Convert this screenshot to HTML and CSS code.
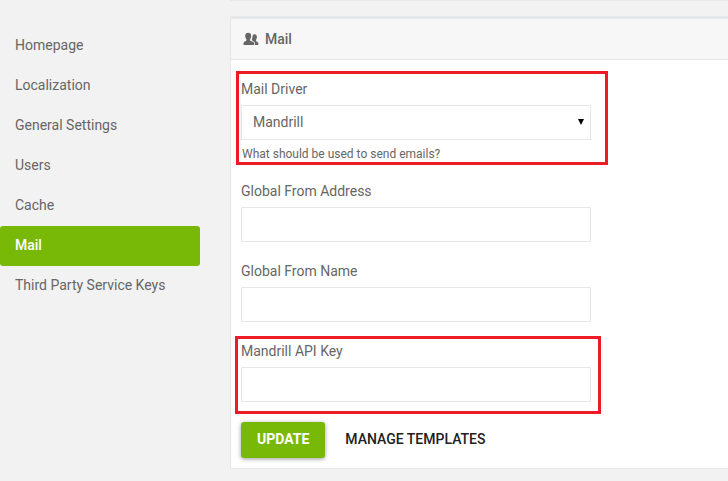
FILE: index.html
```html
<!DOCTYPE html>
<html lang="en">
<head>
<meta charset="utf-8">
<meta name="viewport" content="width=device-width, initial-scale=1">
<title>Mail settings</title>
<link rel="stylesheet" href="styles.css">
</head>
<body>
<div class="layout">
  <nav class="sidebar">
    <a class="nav-link" href="#">Homepage</a>
    <a class="nav-link" href="#">Localization</a>
    <a class="nav-link" href="#">General Settings</a>
    <a class="nav-link" href="#">Users</a>
    <a class="nav-link" href="#">Cache</a>
    <a class="nav-link active" href="#" aria-current="page">Mail</a>
    <a class="nav-link" href="#">Third Party Service Keys</a>
  </nav>
  <main class="content">
    <section class="card">
      <header class="card-header">
        <svg class="icon" viewBox="0 0 16 14" aria-hidden="true">
          <path d="M11.800 13H15.300v-2c-.3-.9-1.800-1.300-2.300-1.900-.2-.5-.1-.9.100-1.300.5-.7.800-1.500.8-2.700 0-1.900-.9-2.900-2.200-2.900-1.100 0-1.900.6-2.200 1.700.1 1.500-.2 2.800-.7 3.700.1.500.3.900.6 1.200 1.300.6 2.400 1.200 2.400 2.400z"/>
          <path d="M.5 13v-2.100c.4-1.200 2.400-1.500 2.900-2.300.2-.5.100-1-.2-1.500C2.600 6.300 2.200 5.300 2.200 4c0-2 1.100-3.200 3-3.200S8.200 2 8.200 4c0 1.300-.4 2.300-1 3.100-.3.500-.4 1-.2 1.500.5.800 3.700 1.100 4 2.300V13z"/>
        </svg>
        <h1 class="card-title">Mail</h1>
      </header>
      <form class="card-body">
        <div class="field highlight highlight-driver">
          <label for="driver">Mail Driver</label>
          <div class="select-wrap">
            <select id="driver" class="control"><option>Mandrill</option></select>
            <svg class="arrow" viewBox="0 0 6 6" aria-hidden="true"><path d="M0 0h6L3 6z"/></svg>
          </div>
          <p class="help">What should be used to send emails?</p>
        </div>
        <div class="field">
          <label for="address">Global From Address</label>
          <input id="address" class="control" type="text">
        </div>
        <div class="field">
          <label for="name">Global From Name</label>
          <input id="name" class="control" type="text">
        </div>
        <div class="field highlight highlight-key">
          <label for="key">Mandrill API Key</label>
          <input id="key" class="control" type="text">
        </div>
        <div class="actions">
          <button class="button primary" type="submit">UPDATE</button>
          <a class="button" href="#">MANAGE TEMPLATES</a>
        </div>
      </form>
    </section>
  </main>
</div>
</body>
</html>
```
FILE: styles.css
```css
* {
  box-sizing: border-box;
}

body {
  margin: 0;
  background: #f2f2f2;
  color: #666;
  font: 14px/20px Roboto, sans-serif;
}

.layout {
  display: grid;
  grid-template-columns: 200px 1fr;
  column-gap: 30px;
}

.sidebar {
  display: flex;
  flex-direction: column;
  padding-top: 26px;
}

.nav-link {
  padding: 9px 15px 11px;
  border-radius: 3px;
  color: #666;
  text-decoration: none;
}

.nav-link.active {
  background: #78b907;
  color: #fff;
  font-weight: 500;
}

.content {
  border-top: 1px solid #e5e9ec;
  padding: 15px 0 12px;
}

.card {
  border: 1px solid #e5e7e8;
  border-top: 3px solid #e5e9ec;
  border-right: 0;
  border-radius: 2px 0 0 2px;
  background: #fff;
}

.card-header {
  display: flex;
  align-items: center;
  gap: 6px;
  padding: 10px 12px;
  border-bottom: 1px solid #e5e7e8;
  background: #f7f7f7;
}

.icon {
  width: 16px;
  height: 14px;
  fill: #666;
}

.card-title {
  margin: 0;
  font-size: 14px;
  line-height: 20px;
  font-weight: 500;
}

.card-body {
  display: flex;
  flex-direction: column;
  gap: 19px;
  padding: 19px 10px 10px;
}

.field {
  display: flex;
  flex-direction: column;
  gap: 6px;
  position: relative;
  width: 100%;
  max-width: 350px;
}

.control {
  display: block;
  width: 100%;
  height: 35px;
  margin: 0;
  padding: 0 11px 1px;
  border: 1px solid #e5e7e8;
  border-radius: 0;
  background: #fff;
  color: #666;
  font: inherit;
  appearance: none;
}

.select-wrap {
  position: relative;
}

.arrow {
  position: absolute;
  top: 14px;
  right: 7px;
  width: 6px;
  height: 6px;
  fill: #000;
  pointer-events: none;
}

.help {
  margin: 0;
  padding-left: 1px;
  font-size: 12px;
  line-height: 16px;
}

.highlight::after {
  content: "";
  position: absolute;
  border: 3px solid #ed1c24;
  pointer-events: none;
}

.highlight-driver::after {
  inset: -8px -17px -3px -5px;
}

.highlight-key::after {
  inset: -5px -10px -12px -6px;
}

.actions {
  display: flex;
  gap: 4px;
  padding-top: 1px;
}

.button {
  padding: 7px 16px 9px;
  border: 0;
  border-radius: 3px;
  background: none;
  color: #212121;
  font: 500 14px/20px Roboto, sans-serif;
  text-decoration: none;
}

.primary {
  background: #78b907;
  box-shadow: 0 1px 4px rgba(0, 0, 0, 0.4);
  color: #fff;
  font-weight: 700;
}
```
